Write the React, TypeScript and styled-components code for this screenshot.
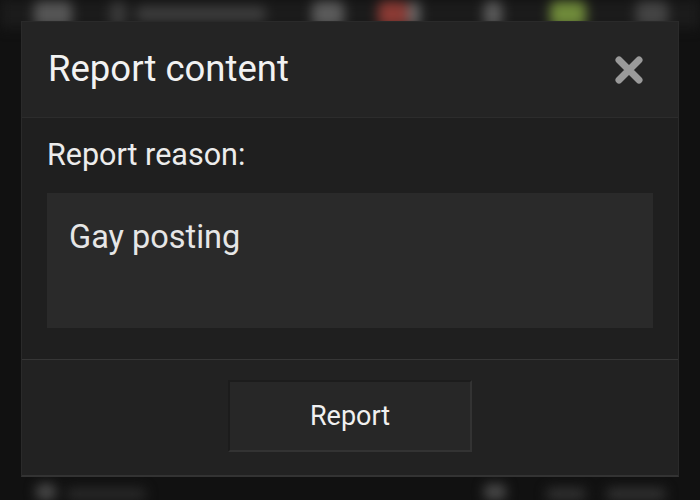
import React from 'react';
import styled, { createGlobalStyle } from 'styled-components';

const GlobalStyle = createGlobalStyle`
    html, body {
        margin: 0;
        padding: 0;
        background: #111111;
        font-family: Roboto, 'Noto Sans', sans-serif;
        overflow: hidden;
    }
`;

const Screen = styled.div`
    position: relative;
    width: 700px;
    height: 500px;
    background: #111111;
`;

const Backdrop = styled.div`
    display: flex;
    flex-direction: column;
    justify-content: space-between;
    height: 100%;
    filter: blur(6px);
`;

const TopBar = styled.div`
    display: flex;
    align-items: center;
    height: 28px;
    padding: 0 0 0 34px;
    background: #1b1b1b;
`;

const BottomBar = styled.div`
    display: flex;
    align-items: flex-end;
    height: 18px;
    padding: 0 0 0 36px;
`;

const Blob = styled.div<{ w: number; c: string; ml: number; h?: number }>`
    width: ${(p) => p.w}px;
    height: ${(p) => p.h ?? 26}px;
    margin-left: ${(p) => p.ml}px;
    background: ${(p) => p.c};
    border-radius: 6px;
    flex-shrink: 0;
`;

const Overlay = styled.div`
    position: absolute;
    inset: 0;
    display: flex;
    align-items: flex-start;
    justify-content: center;
    padding-top: 21px;
`;

const Modal = styled.div`
    display: flex;
    flex-direction: column;
    width: 658px;
    background: #1f1f1f;
    border: 1px solid #2a2a2a;
    border-bottom: 2px solid #333;
    box-sizing: border-box;
`;

const Header = styled.div`
    display: flex;
    align-items: center;
    justify-content: space-between;
    height: 96px;
    padding: 0 34px 0 26px;
    background: #242424;
    border-bottom: 1px solid #2c2c2c;
    box-sizing: border-box;
`;

const Title = styled.h2`
    margin: 0;
    font-size: 36.5px;
    line-height: 1;
    font-weight: 400;
    color: #f2f2f2;
`;

const CloseButton = styled.button`
    display: flex;
    padding: 0;
    border: none;
    background: none;
    cursor: pointer;
`;

const Body = styled.div`
    display: flex;
    flex-direction: column;
    padding: 17px 25px 31px 25px;
    border-bottom: 1px solid #363636;
`;

const Label = styled.label`
    font-size: 30.5px;
    line-height: 40px;
    color: #ececec;
    margin-bottom: 18px;
`;

const ReasonInput = styled.textarea`
    height: 135px;
    padding: 24px 23px 0 22px;
    box-sizing: border-box;
    background: #2a2a2a;
    border: none;
    outline: none;
    resize: none;
    font-family: Roboto, 'Noto Sans', sans-serif;
    font-size: 32.5px;
    line-height: 40px;
    color: #e6e6e6;
`;

const Footer = styled.div`
    display: flex;
    justify-content: center;
    padding: 20px 0 23px;
    background: #222222;
`;

const ReportButton = styled.button`
    width: 244px;
    height: 72px;
    background: #272727;
    border: 2px solid #333;
    border-top-color: #1c1c1c;
    border-left-color: #1c1c1c;
    font-family: Roboto, 'Noto Sans', sans-serif;
    font-size: 27px;
    color: #f0f0f0;
    cursor: pointer;
`;

const CloseIcon = () => (
    <svg width="30" height="30" viewBox="0 0 30 30">
        <path d="M5 5 L25 25 M25 5 L5 25" stroke="#9a9a9a" strokeWidth="7" strokeLinecap="round" />
    </svg>
);

const App = () => {
    return (
        <Screen>
            <GlobalStyle />
            <Backdrop>
                <TopBar>
                    <Blob w={38} c="#555" ml={0} />
                    <Blob w={16} c="#3a3a3a" ml={38} />
                    <Blob w={130} c="#3c3c3c" ml={10} h={16} />
                    <Blob w={32} c="#5a5a5a" ml={46} />
                    <Blob w={30} c="#8a3a34" ml={34} />
                    <Blob w={12} c="#666" ml={0} />
                    <Blob w={18} c="#5a5a5a" ml={64} />
                    <Blob w={36} c="#6f8a3a" ml={48} />
                    <Blob w={32} c="#444" ml={50} />
                </TopBar>
                <BottomBar>
                    <Blob w={20} c="#4a4a4a" ml={0} h={16} />
                    <Blob w={80} c="#2a2a2a" ml={10} h={12} />
                    <Blob w={22} c="#4a4a4a" ml={338} h={16} />
                    <Blob w={40} c="#333" ml={40} h={12} />
                    <Blob w={60} c="#333" ml={20} h={12} />
                </BottomBar>
            </Backdrop>
            <Overlay>
                <Modal>
                    <Header>
                        <Title>Report content</Title>
                        <CloseButton aria-label="Close">
                            <CloseIcon />
                        </CloseButton>
                    </Header>
                    <Body>
                        <Label htmlFor="reason">Report reason:</Label>
                        <ReasonInput id="reason" defaultValue="Gay posting" />
                    </Body>
                    <Footer>
                        <ReportButton>Report</ReportButton>
                    </Footer>
                </Modal>
            </Overlay>
        </Screen>
    );
};

export default App;
